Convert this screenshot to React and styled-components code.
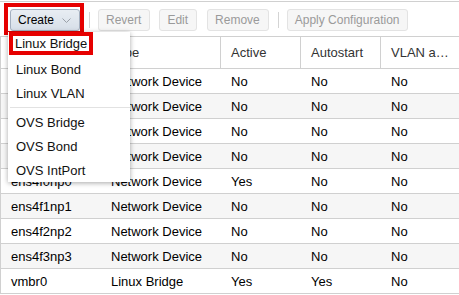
import React from 'react'
import styled, { createGlobalStyle } from 'styled-components'

const GlobalStyle = createGlobalStyle`
  body {
    margin: 0;
    background: #fff;
    font-family: "Liberation Sans", Arial, sans-serif;
    font-size: 13px;
    color: #000;
  }
`

const Panel = styled.div`
  position: relative;
  margin-top: 1px;
  border-top: 1px solid #d0d0d0;
  width: 459px;
  overflow: hidden;
`

const Toolbar = styled.div`
  display: flex;
  align-items: center;
  height: 22px;
  padding: 7px 10px 5px;
`

const Button = styled.button`
  position: relative;
  display: inline-flex;
  align-items: center;
  gap: 8px;
  height: 22px;
  padding: 0 8px 0 7px;
  margin-right: ${(p) => p.$gap || 0}px;
  border: 1px solid ${(p) => (p.$active ? '#a3afbf' : '#e3e3e3')};
  border-radius: 3px;
  background: ${(p) => (p.$active ? 'linear-gradient(#e8edf3, #d7dfe9)' : '#f6f6f6')};
  color: ${(p) => (p.$active ? '#000' : '#9a9a9a')};
  font-family: "Liberation Sans", Arial, sans-serif;
  font-size: 12px;
  cursor: default;

  ${(p) =>
    p.$marked &&
    `
    &::after {
      content: "";
      position: absolute;
      top: -7px;
      left: -7px;
      right: -5px;
      bottom: -5px;
      border: 4px solid #e60000;
      pointer-events: none;
    }
  `}
`

const Separator = styled.span`
  width: 1px;
  height: 16px;
  background: #d4d4d4;
  margin: 0 ${(p) => p.$right || 8}px 0 ${(p) => p.$left || 9}px;
`

const Menu = styled.div`
  position: absolute;
  top: 30px;
  left: 8px;
  width: 122px;
  padding: 1px 0 0;
  background: #fff;
  box-shadow: 0 1px 5px rgba(0, 0, 0, 0.35);
  z-index: 5;
`

const MenuItem = styled.div`
  display: flex;
  align-items: center;
  height: 24px;
  padding-left: 8px;
  color: #111;
  font-size: 13px;
`

const Marked = styled.span`
  position: relative;
  display: inline-block;
  line-height: 15px;
  padding: 0 2px;
  margin: 0 0 3px -3px;
  background: #fff;

  &::after {
    content: "";
    position: absolute;
    top: -4px;
    left: -4px;
    right: -4px;
    bottom: -4px;
    border: 4px solid #e60000;
  }
`

const MenuSeparator = styled.div`
  height: 1px;
  margin: 2px 0 2px 2px;
  background: #e2e2e2;
`

const Grid = styled.div`
  border-left: 1px solid #d0d0d0;
`

const Row = styled.div`
  display: grid;
  grid-template-columns: 100px 120px 80px 80px 1fr;
  height: ${(p) => (p.$header ? 31 : 24)}px;
  border-top: ${(p) => (p.$header ? '1px solid #d0d0d0' : 'none')};
  border-bottom: 1px solid #d0d0d0;
  background: ${(p) => (p.$alt ? '#f6f6f6' : '#fff')};
`

const Cell = styled.div`
  display: flex;
  align-items: center;
  padding-left: 10px;
  white-space: nowrap;
  overflow: hidden;
  color: ${(p) => (p.$header ? '#333' : '#000')};
  border-right: ${(p) => (p.$header && !p.$last ? '1px solid #d0d0d0' : 'none')};
`

const Chevron = () => (
  <svg width="9" height="5" viewBox="0 0 9 5">
    <polyline points="0.5,0.5 4.5,4.5 8.5,0.5" fill="none" stroke="#9aa0a8" strokeWidth="1" />
  </svg>
)

const columns = ['Name', 'Type', 'Active', 'Autostart', 'VLAN a…']

const rows = [
  ['eno1', 'Network Device', 'No', 'No', 'No'],
  ['eno2', 'Network Device', 'No', 'No', 'No'],
  ['eno3', 'Network Device', 'No', 'No', 'No'],
  ['eno4', 'Network Device', 'No', 'No', 'No'],
  ['ens4f0np0', 'Network Device', 'Yes', 'No', 'No'],
  ['ens4f1np1', 'Network Device', 'No', 'No', 'No'],
  ['ens4f2np2', 'Network Device', 'No', 'No', 'No'],
  ['ens4f3np3', 'Network Device', 'No', 'No', 'No'],
  ['vmbr0', 'Linux Bridge', 'Yes', 'Yes', 'No'],
]

const App = () => {
  return (
    <>
      <GlobalStyle />
      <Panel>
        <Toolbar>
          <Button $active $marked>
            Create <Chevron />
          </Button>
          <Separator />
          <Button $gap={9}>Revert</Button>
          <Button $gap={10}>Edit</Button>
          <Button>Remove</Button>
          <Separator />
          <Button>Apply Configuration</Button>
        </Toolbar>

        <Grid>
          <Row $header>
            {columns.map((c, i) => (
              <Cell key={c} $header $last={i === columns.length - 1}>
                {c}
              </Cell>
            ))}
          </Row>
          {rows.map((r, i) => (
            <Row key={r[0]} $alt={i % 2 === 1}>
              {r.map((v, j) => (
                <Cell key={j}>{v}</Cell>
              ))}
            </Row>
          ))}
        </Grid>

        <Menu>
          <MenuItem>
            <Marked>Linux Bridge</Marked>
          </MenuItem>
          <MenuItem>Linux Bond</MenuItem>
          <MenuItem>Linux VLAN</MenuItem>
          <MenuSeparator />
          <MenuItem>OVS Bridge</MenuItem>
          <MenuItem>OVS Bond</MenuItem>
          <MenuItem>OVS IntPort</MenuItem>
        </Menu>
      </Panel>
    </>
  )
}

export default App
